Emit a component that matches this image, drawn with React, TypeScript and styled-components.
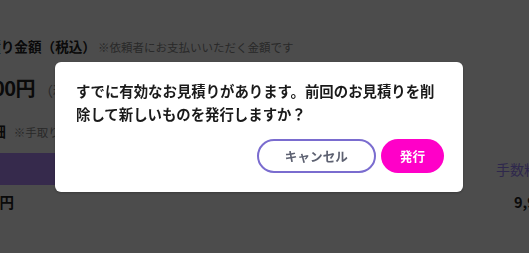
import styled, { createGlobalStyle } from "styled-components";

const GlobalStyle = createGlobalStyle`
  html, body {
    margin: 0;
    padding: 0;
    width: 529px;
    height: 253px;
    overflow: hidden;
    background: #ffffff;
    font-family: "Noto Sans CJK JP", "Noto Sans", sans-serif;
  }
`;

const Page = styled.div`
  width: 720px;
  margin-left: -42px;
  padding-top: 36px;
  display: flex;
  flex-direction: column;
`;

const HeadingRow = styled.div`
  display: flex;
  align-items: baseline;
  gap: 2px;
  height: 28px;
  margin-left: 2px;
`;

const Heading = styled.span`
  font-size: 13.6px;
  font-weight: 700;
  color: #222;
`;

const Note = styled.span`
  font-size: 11.5px;
  color: #8a8a8a;
`;

const AmountRow = styled.div`
  display: flex;
  align-items: baseline;
  gap: 4px;
  margin-top: 9px;
  margin-left: -5px;
  height: 30px;
`;

const Amount = styled.span`
  font-size: 20px;
  font-weight: 700;
  color: #222;
  letter-spacing: -0.5px;
`;

const AmountSub = styled.span`
  font-size: 14px;
  color: #8a8a8a;
`;

const SubRow = styled.div`
  display: flex;
  align-items: baseline;
  gap: 8px;
  margin-top: 17px;
  margin-left: 19px;

  & > span:first-child {
    font-size: 14.4px;
  }
`;

const Table = styled.div`
  display: grid;
  grid-template-columns: 320px 1fr;
  margin-top: 12px;
`;

const HeadCell = styled.div<{ $filled?: boolean }>`
  height: 32px;
  display: flex;
  align-items: center;
  padding-left: ${({ $filled }) => ($filled ? "16px" : "218px")};
  background: ${({ $filled }) => ($filled ? "#b48cff" : "transparent")};
  color: #9c86ff;
  font-size: 14px;
`;

const BodyCell = styled.div<{ $indent: number }>`
  height: 32px;
  display: flex;
  align-items: center;
  margin-left: ${({ $indent }) => $indent}px;
  font-size: 14.5px;
  font-weight: 700;
  color: #222;
`;

const Backdrop = styled.div`
  position: fixed;
  inset: 0;
  background: rgba(0, 0, 0, 0.7);
  display: flex;
  align-items: center;
  justify-content: center;
  padding-right: 11px;
`;

const Dialog = styled.div`
  width: 408px;
  box-sizing: border-box;
  background: #fff;
  border-radius: 6px;
  padding: 17px 19px 19px 21px;
  box-shadow: 0 1px 3px rgba(0, 0, 0, 0.25);
`;

const Message = styled.p`
  margin: 0;
  font-size: 14.4px;
  font-weight: 700;
  line-height: 23px;
  color: #1a1a1a;
`;

const Actions = styled.div`
  display: flex;
  justify-content: flex-end;
  gap: 5px;
  margin-top: 14px;
`;

const Button = styled.button<{ $primary?: boolean }>`
  height: 34px;
  box-sizing: border-box;
  padding: 0 ${({ $primary }) => ($primary ? "19px" : "26px")};
  border-radius: 17px;
  border: ${({ $primary }) => ($primary ? "none" : "2px solid #7a6ccf")};
  background: ${({ $primary }) => ($primary ? "#ff00c8" : "#fff")};
  color: ${({ $primary }) => ($primary ? "#fff" : "#5d6171")};
  font-family: inherit;
  font-size: 12.6px;
  font-weight: 700;
  cursor: pointer;
`;

export default function App() {
  return (
    <>
      <GlobalStyle />
      <Page>
        <HeadingRow>
          <Heading>お見積り金額（税込）</Heading>
          <Note>※依頼者にお支払いいただく金額です</Note>
        </HeadingRow>
        <AmountRow>
          <Amount>11,000円</Amount>
          <AmountSub>（税抜 10,000円）</AmountSub>
        </AmountRow>
        <SubRow>
          <Heading>明細</Heading>
          <Note>※手取り金額は手数料を差し引いた金額です</Note>
        </SubRow>
        <Table>
          <HeadCell $filled />
          <HeadCell>手数料</HeadCell>
          <BodyCell $indent={-6}>10,000円</BodyCell>
          <BodyCell $indent={236}>9,900円</BodyCell>
        </Table>
      </Page>
      <Backdrop>
        <Dialog>
          <Message>
            すでに有効なお見積りがあります。前回のお見積りを削除して新しいものを発行しますか？
          </Message>
          <Actions>
            <Button>キャンセル</Button>
            <Button $primary>発行</Button>
          </Actions>
        </Dialog>
      </Backdrop>
    </>
  );
}
